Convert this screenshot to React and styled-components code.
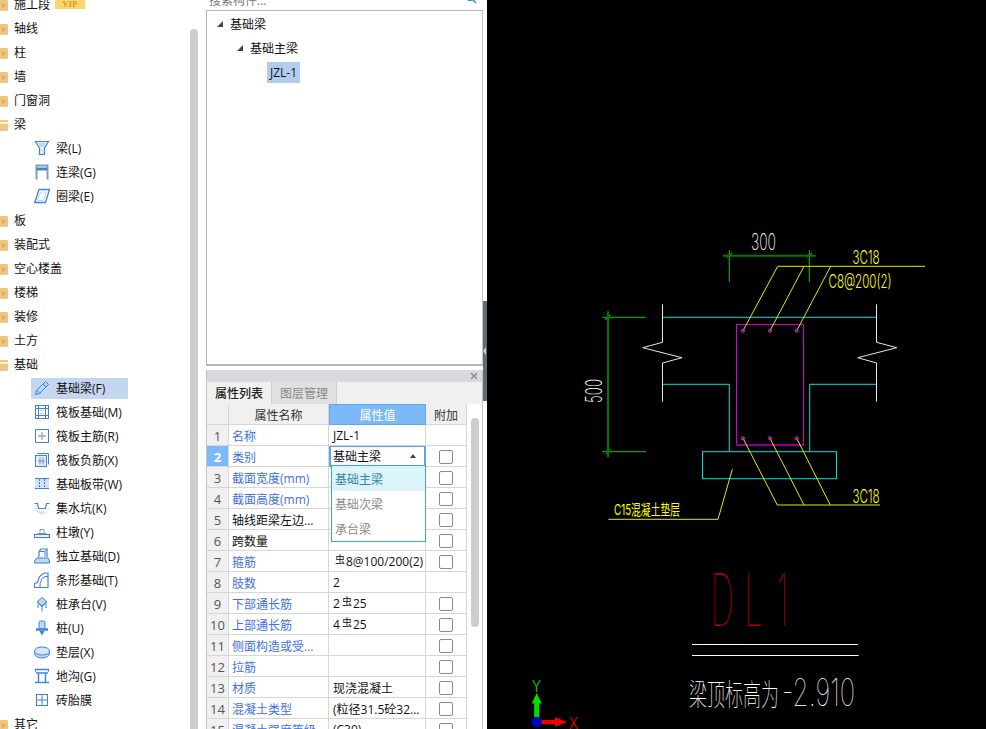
import React from "react";
import styled, { createGlobalStyle } from "styled-components";

const Blue = "#3f82d8";
const Pale = "#bcd6f3";

const icons = {
  beam: (
    <>
      <path d="M1.500 1.500h13l-4 6.500v6.500h-5V8z" fill="none" stroke={Blue} strokeWidth="1.200" />
      <path d="M3.500 2.500h9l-3 4.500h-3z" fill={Pale} />
      <path d="M6 8l4 6M10 8l-4 6" stroke={Pale} />
    </>
  ),
  link: (
    <>
      <path d="M2.500 15.500V1.500h11v14" fill="none" stroke="#8b9aa8" strokeWidth="2" />
      <rect x="3" y="3.500" width="10" height="3" fill={Blue} />
    </>
  ),
  ring: (
    <>
      <path d="M5 1.500h10.500l-4 13H.8z" fill="none" stroke={Blue} strokeWidth="1.300" />
      <path d="M6.500 4h6l-3 8.500H3.500z" fill="none" stroke={Pale} />
    </>
  ),
  pencil: (
    <>
      <path d="M1.500 14.500l1-4L11.500 1.500l3 3-9 9z" fill={Pale} stroke={Blue} />
      <path d="M3 10.500l3 3M9 4l3 3" stroke={Blue} />
    </>
  ),
  raft: (
    <>
      <rect x="1.500" y="1.500" width="13" height="13" fill="none" stroke={Blue} />
      <path d="M1 4.500h14M1 11.500h14M4.500 1v14M11.500 1v14" stroke={Blue} />
      <path d="M6 6.500h4M6 9.500h4" stroke={Pale} />
    </>
  ),
  rebar: (
    <>
      <rect x="1.500" y="1.500" width="13" height="13" fill="none" stroke={Blue} />
      <path d="M8 4v8M4 8h8" stroke="#9ab0c8" strokeWidth="1.500" />
    </>
  ),
  negative: (
    <>
      <rect x="1.500" y="3.500" width="11" height="11" fill="#e4eefa" stroke={Blue} />
      <path d="M3.500 1.500h11v11" fill="none" stroke={Blue} />
      <path d="M6 5.500v7M9 5.500v7M4 9h7" stroke="#6f8fb8" />
    </>
  ),
  strip: (
    <>
      <rect x="1" y="2" width="14" height="11" fill="#d3e4f7" />
      <path d="M1 2.500h14M1 12.500h14" stroke={Blue} />
      <path d="M5.500 3v9M10.500 3v9" stroke={Blue} strokeDasharray="2 1" />
    </>
  ),
  pit: (
    <>
      <path d="M.5 3.500h3l1 5h7l1-5h3" fill="none" stroke={Blue} strokeWidth="1.200" />
      <path d="M1 8c2 7 12 7 14 0" fill="none" stroke="#9fb4c8" strokeDasharray="1 1" />
      <path d="M5 11h6M6 13h4" stroke="#b5c2ce" strokeDasharray="1 1" />
    </>
  ),
  pier: (
    <>
      <path d="M6 9.500V5.500h4v4" fill="none" stroke="#8b9aa8" />
      <path d="M3.500 9.500h9" stroke="#8b9aa8" />
      <rect x=".5" y="10.500" width="15" height="3" fill="none" stroke={Blue} strokeWidth="1.200" />
    </>
  ),
  isolated: (
    <>
      <path d="M5 9V3.500L7 1h6v8" fill="#fff" stroke={Blue} strokeWidth="1.200" />
      <path d="M5 3.500h6V9M11 3.500L13 1" fill="none" stroke={Blue} />
      <path d="M3 10h11l1.500 3v2H.5v-2z" fill={Pale} stroke={Blue} />
    </>
  ),
  stripBase: (
    <>
      <path d="M.5 15.500v-4l3-1 2-6L10 1h4v14.500z" fill="none" stroke={Blue} strokeWidth="1.200" />
      <path d="M6 15.500v-4l2-5 3-2h3" fill="none" stroke={Blue} />
    </>
  ),
  cap: (
    <>
      <path d="M8 1.500L13 6l-5 4.500L3 6z" fill={Pale} stroke={Blue} />
      <path d="M4 8v4M8 10v5.500M12 8v4M3 6l5 4 5-4" fill="none" stroke={Blue} />
    </>
  ),
  pile: (
    <>
      <rect x="5" y="1" width="6" height="8" rx="1.500" fill={Pale} stroke={Blue} />
      <path d="M2 9.500h12" stroke={Blue} strokeWidth="2.500" />
      <path d="M5.500 11h5L8 15.500z" fill={Blue} />
    </>
  ),
  cushion: (
    <>
      <ellipse cx="8" cy="9.500" rx="7.500" ry="4.500" fill={Pale} stroke={Blue} />
      <ellipse cx="8" cy="7" rx="7.500" ry="4" fill="#d8e7f8" stroke={Blue} />
    </>
  ),
  trench: (
    <>
      <path d="M1 1.500h14M2.500 5h11" stroke={Blue} strokeWidth="1.400" />
      <path d="M4.500 5v9M11.500 5v9" stroke={Blue} strokeWidth="1.400" />
      <path d="M1 14.500h14" stroke={Blue} strokeWidth="1.400" />
      <path d="M1 1.500L2.500 5M15 1.500L13.500 5" stroke={Blue} />
    </>
  ),
  brick: (
    <>
      <rect x="2.500" y="2.500" width="11" height="11" fill="none" stroke={Blue} />
      <path d="M8 2.500v11M2.500 8h11" stroke={Blue} />
    </>
  ),
};

const tree = [
  { name: "施工段", vip: true },
  { name: "轴线" },
  { name: "柱" },
  { name: "墙" },
  { name: "门窗洞" },
  { name: "梁", open: true },
  { name: "梁(L)", icon: "beam" },
  { name: "连梁(G)", icon: "link" },
  { name: "圈梁(E)", icon: "ring" },
  { name: "板" },
  { name: "装配式" },
  { name: "空心楼盖" },
  { name: "楼梯" },
  { name: "装修" },
  { name: "土方" },
  { name: "基础", open: true },
  { name: "基础梁(F)", icon: "pencil", active: true },
  { name: "筏板基础(M)", icon: "raft" },
  { name: "筏板主筋(R)", icon: "rebar" },
  { name: "筏板负筋(X)", icon: "negative" },
  { name: "基础板带(W)", icon: "strip" },
  { name: "集水坑(K)", icon: "pit" },
  { name: "柱墩(Y)", icon: "pier" },
  { name: "独立基础(D)", icon: "isolated" },
  { name: "条形基础(T)", icon: "stripBase" },
  { name: "桩承台(V)", icon: "cap" },
  { name: "桩(U)", icon: "pile" },
  { name: "垫层(X)", icon: "cushion" },
  { name: "地沟(G)", icon: "trench" },
  { name: "砖胎膜", icon: "brick" },
  { name: "其它" },
];

const Bar = () => <Steel>虫</Steel>;

const props = [
  { name: "名称", value: "JZL-1", link: true, noCheck: true },
  { name: "类别", value: "基础主梁", link: true, editing: true },
  { name: "截面宽度(mm)", link: true },
  { name: "截面高度(mm)", link: true },
  { name: "轴线距梁左边..." },
  { name: "跨数量" },
  { name: "箍筋", value: <><Bar />8@100/200(2)</>, link: true },
  { name: "肢数", value: "2", link: true, noCheck: true },
  { name: "下部通长筋", value: <>2<Bar />25</>, link: true },
  { name: "上部通长筋", value: <>4<Bar />25</>, link: true },
  { name: "侧面构造或受...", link: true },
  { name: "拉筋", link: true },
  { name: "材质", value: "现浇混凝土", link: true },
  { name: "混凝土类型", value: "(粒径31.5砼32...", link: true },
  { name: "混凝土强度等级", value: "(C30)", link: true },
];

function Folder({ open }) {
  return (
    <FolderIcon viewBox="0 0 16 14">
      <path d="M0 2.500Q0 1 1.500 1h4L7.500 3H15q1 0 1 1v9q0 1-1 1H1q-1 0-1-1z" fill="#f0c780" />
      {open ? (
        <path d="M4 5h12v2H5z" fill="#fcefd2" />
      ) : (
        <path d="M10 5l4 3.500-4 3.500z" fill="#dfb066" />
      )}
    </FolderIcon>
  );
}

function TreeRow({ item }) {
  if (item.icon) {
    return (
      <ChildRow $active={item.active}>
        <Icon viewBox="0 0 16 16">{icons[item.icon]}</Icon>
        {item.name}
      </ChildRow>
    );
  }
  return (
    <ParentRow>
      <Folder open={item.open} />
      {item.name}
      {item.vip && <Vip>VIP</Vip>}
    </ParentRow>
  );
}

function Drawing() {
  return (
    <svg viewBox="487 0 499 729" width="499" height="729" fill="none">
      {/* dimensions */}
      <g stroke="#00c800">
        <path d="M729.300 250v32M809.300 250v32M602.300 317.300H646M602.300 451.700H646" />
        <path d="M726.500 258l5.500-5M806.500 258l5.500-5M605 320l5.500-5.500M605 454.500l5.500-5.500" />
      </g>
      <path d="M723 255.700h92.700M608 311v146.300" stroke="#007a00" strokeWidth="2" />
      {/* concrete outline */}
      <g stroke="#00e0e0">
        <path d="M662.700 317.300H876M662.700 384.300h66.600v67.400M876 384.300h-66.300v67.400" />
        <rect x="702.500" y="451.700" width="134" height="27" />
      </g>
      {/* break lines */}
      <g stroke="#e8e8e8">
        <path d="M662.500 304.300v38l-19.800 5.400 39.300 10-19.500 5.300v38.700" />
        <path d="M876.500 304.300v38l20.200 5.400-39 10 18.800 5.300v38.700" />
      </g>
      {/* stirrup and bars */}
      <path d="M736.500 445V324.500h67V445" stroke="#d000d0" />
      <path d="M736 445h68" stroke="#8a008a" strokeWidth="2" />
      {/* leaders */}
      <g stroke="#e8e800">
        <path d="M925 266.300H777.700L743 330.700M804 266.300l-34 64.400M830.700 266.300l-34 64.400" />
        <path d="M880 505H777.300L743 438.300M804 505l-34-66.700M830.300 505l-33.600-66.700" />
        <path d="M732.300 469.300L718 519.300H608.300" />
      </g>
      <g stroke="#ff20ff">
        {[743, 770, 796.7].map((x) => (
          <React.Fragment key={x}>
            <circle cx={x} cy="330.700" r="1.500" />
            <circle cx={x} cy="438.300" r="1.500" />
          </React.Fragment>
        ))}
      </g>
      <CadText $weight={200} x="751" y="250" fontSize="23" textLength="25" lengthAdjust="spacingAndGlyphs" fill="#fff">300</CadText>
      <CadText $weight={200} x="0" y="0" fontSize="23" textLength="24" lengthAdjust="spacingAndGlyphs" fill="#fff" transform="translate(602 403) rotate(-90)">500</CadText>
      <CadText $weight={300} x="852.500" y="264" fontSize="18" textLength="27" lengthAdjust="spacingAndGlyphs" fill="#ffff00">3C18</CadText>
      <CadText $weight={300} x="852.500" y="503" fontSize="18" textLength="27" lengthAdjust="spacingAndGlyphs" fill="#ffff00">3C18</CadText>
      <CadText $weight={300} x="828.500" y="288" fontSize="18" textLength="63" lengthAdjust="spacingAndGlyphs" fill="#ffff00">C8@200(2)</CadText>
      <CadText $weight={400} x="614" y="515" fontSize="15" textLength="66" lengthAdjust="spacingAndGlyphs" fill="#ffff00">C15混凝土垫层</CadText>
      <CadText $weight={100} x="0 75 146" y="0" fontSize="72" fill="#f00000" stroke="#000" strokeWidth="0.400" transform="translate(711 626) scale(.45 1)">DL1</CadText>
      <path d="M692 644.500h165.700M692 655.500h166.700" stroke="#fff" />
      <CadText $weight={100} x="0" y="0" fontSize="30" fill="#fff" transform="translate(689 705) scale(.6 1)">梁顶标高为</CadText>
      <CadText $weight={100} x="782" y="706" fontSize="38" textLength="73" lengthAdjust="spacingAndGlyphs" fill="#fff">-2.910</CadText>
      {/* axis */}
      <path d="M536.700 722v-22" stroke="#00e000" strokeWidth="5" />
      <path d="M531.700 703.500l5-10.500 5 10.500z" fill="#00e000" />
      <path d="M536.700 722H556" stroke="#f00000" strokeWidth="4" />
      <path d="M555 717l12 5-12 5z" fill="#f00000" />
      <circle cx="536.700" cy="722" r="5.200" fill="#0000c0" />
      <CadText $weight={300} x="532" y="692" fontSize="16" textLength="9" lengthAdjust="spacingAndGlyphs" fill="#00e000">Y</CadText>
      <CadText $weight={300} x="569" y="728.500" fontSize="16" textLength="9" lengthAdjust="spacingAndGlyphs" fill="#f00000">X</CadText>
    </svg>
  );
}

export default function App() {
  return (
    <>
      <GlobalStyle />
      <Page>
        <LeftPanel>
          <TreeList>
            {tree.map((item) => (
              <TreeRow key={item.name} item={item} />
            ))}
          </TreeList>
          <TreeScroll />
        </LeftPanel>
        <MiddlePanel>
          <TopPanel>
            <SearchBar>
              <SearchText>搜索构件...</SearchText>
              <SearchIcon viewBox="0 0 12 12">
                <circle cx="5" cy="5" r="3.500" fill="none" stroke="#3c8fd8" strokeWidth="1.400" />
                <path d="M7.500 7.500L11 11" stroke="#3c8fd8" strokeWidth="1.600" />
              </SearchIcon>
            </SearchBar>
            <ComponentTree>
              <Node $level={0}><Caret />基础梁</Node>
              <Node $level={1}><Caret />基础主梁</Node>
              <LeafRow><Leaf>JZL-1</Leaf></LeafRow>
            </ComponentTree>
          </TopPanel>
          <BottomPanel>
            <CloseBar>
              <CloseMark viewBox="0 0 8 8">
                <path d="M1 1l6 6M7 1L1 7" stroke="#8a8f94" strokeWidth="1.500" />
              </CloseMark>
            </CloseBar>
            <Tabs>
              <Tab $active>属性列表</Tab>
              <Tab>图层管理</Tab>
            </Tabs>
            <TableArea>
              <Table>
                <Row>
                  <HeadCell />
                  <HeadCell>属性名称</HeadCell>
                  <HeadCell $selected>属性值</HeadCell>
                  <HeadCell>附加</HeadCell>
                </Row>
                {props.map((prop, index) => (
                  <Row key={prop.name}>
                    <NumCell $selected={prop.editing}>{index + 1}</NumCell>
                    <NameCell $link={prop.link}>{prop.name}</NameCell>
                    {prop.editing ? (
                      <EditCell>
                        {prop.value}
                        <UpArrow />
                        <Menu>
                          <MenuItem $active>基础主梁</MenuItem>
                          <MenuItem>基础次梁</MenuItem>
                          <MenuItem>承台梁</MenuItem>
                        </Menu>
                      </EditCell>
                    ) : (
                      <ValueCell>{prop.value}</ValueCell>
                    )}
                    <CheckCell>{!prop.noCheck && <Check />}</CheckCell>
                  </Row>
                ))}
              </Table>
              <TableScroll>
                <TableThumb />
              </TableScroll>
            </TableArea>
          </BottomPanel>
        </MiddlePanel>
        <Splitter>
          <Handle />
        </Splitter>
        <Canvas>
          <Drawing />
        </Canvas>
      </Page>
    </>
  );
}

const GlobalStyle = createGlobalStyle`
  html, body {
    margin: 0;
    height: 100%;
    overflow: hidden;
    background: #fff;
  }
  body {
    font-family: "Open Sans", "Noto Sans CJK SC", "Liberation Sans", sans-serif;
    font-size: 12px;
    color: #111;
  }
`;

const Page = styled.div`
  display: flex;
  width: 986px;
  height: 729px;
  overflow: hidden;
`;

const LeftPanel = styled.div`
  display: flex;
  width: 206px;
  flex: none;
  overflow: hidden;
`;

const TreeList = styled.div`
  display: flex;
  flex-direction: column;
  width: 190px;
  flex: none;
  margin-top: -8px;
`;

const ParentRow = styled.div`
  display: flex;
  align-items: center;
  height: 24px;
  flex: none;
  margin-left: -8px;
`;

const FolderIcon = styled.svg`
  width: 16px;
  height: 14px;
  margin-right: 6px;
  flex: none;
`;

const Vip = styled.span`
  align-self: flex-start;
  width: 30px;
  height: 17px;
  padding-top: 8px;
  box-sizing: border-box;
  margin-left: 5px;
  background: #ffd468;
  color: #c9992c;
  font: bold 8px/9px "Liberation Serif", serif;
  letter-spacing: 0.5px;
  text-align: center;
`;

const ChildRow = styled.div`
  display: flex;
  align-items: center;
  width: 97px;
  height: 21px;
  flex: none;
  margin: 2px 0 1px 31px;
  padding: 0 0 1px 3px;
  box-sizing: border-box;
  white-space: nowrap;
  background: ${(p) => (p.$active ? "#c5d7f0" : "transparent")};
`;

const Icon = styled.svg`
  width: 16px;
  height: 16px;
  margin-right: 6px;
  flex: none;
`;

const TreeScroll = styled.div`
  width: 8px;
  margin-top: 29px;
  border-radius: 4px 4px 0 0;
  background: #cdcdcd;
`;

const MiddlePanel = styled.div`
  display: flex;
  flex-direction: column;
  width: 277px;
  flex: none;
`;

const TopPanel = styled.div`
  display: flex;
  flex-direction: column;
  height: 366px;
  flex: none;
  border-bottom: 1px solid #b4b4b4;
  box-sizing: border-box;
`;

const SearchBar = styled.div`
  display: flex;
  align-items: center;
  justify-content: space-between;
  height: 20px;
  margin-top: -10px;
  padding: 0 6px 0 3px;
  flex: none;
`;

const SearchText = styled.span`
  color: #777;
`;

const SearchIcon = styled.svg`
  width: 12px;
  height: 12px;
  margin-top: -4px;
`;

const ComponentTree = styled.div`
  flex: 1;
  padding-top: 1px;
  border: 1px solid #b8b8b8;
  border-right-color: #c4c4c4;
`;

const Node = styled.div`
  display: flex;
  align-items: center;
  height: 24px;
  padding-left: ${(p) => 10 + p.$level * 20}px;
`;

const Caret = styled.span`
  width: 0;
  height: 0;
  margin-right: 7px;
  border-style: solid;
  border-width: 0 0 6px 6px;
  border-color: transparent transparent #444 transparent;
`;

const LeafRow = styled.div`
  display: flex;
  align-items: center;
  height: 24px;
  padding-left: 60px;
`;

const Leaf = styled.span`
  padding: 2px 3px;
  line-height: 17px;
  background: #b0cdf0;
`;

const BottomPanel = styled.div`
  display: flex;
  flex-direction: column;
  flex: 1;
  min-height: 0;
  margin-top: 4px;
  border-right: 1px solid #c4c4c4;
  border-left: 1px solid #c4c4c4;
`;

const CloseBar = styled.div`
  display: flex;
  align-items: center;
  justify-content: flex-end;
  height: 12px;
  padding-right: 4px;
  flex: none;
  background: #d8dade;
`;

const CloseMark = styled.svg`
  width: 8px;
  height: 8px;
`;

const Tabs = styled.div`
  display: flex;
  height: 22px;
  flex: none;
  background: #f0f0f0;
`;

const Tab = styled.div`
  display: flex;
  align-items: center;
  justify-content: center;
  width: 65px;
  font-weight: ${(p) => (p.$active ? 500 : 400)};
  color: ${(p) => (p.$active ? "#222" : "#888")};
  background: ${(p) => (p.$active ? "#f0f0f0" : "#e0e0e0")};
  border-right: 1px solid #d0d0d0;
  box-sizing: border-box;
`;

const TableArea = styled.div`
  display: flex;
  flex: 1;
  min-height: 0;
  overflow: hidden;
`;

const Table = styled.div`
  width: 260px;
  flex: none;
`;

const Row = styled.div`
  display: grid;
  grid-template-columns: 22px 100px 97px 41px;
  height: 21px;
`;

const Cell = styled.div`
  display: flex;
  align-items: center;
  min-width: 0;
  padding-top: 1px;
  white-space: nowrap;
  border-right: 1px solid #d6d6d6;
  border-bottom: 1px solid #d6d6d6;
  box-sizing: border-box;
`;

const HeadCell = styled(Cell)`
  justify-content: center;
  background: ${(p) => (p.$selected ? "#7db9f6" : "#f0f0f0")};
  color: ${(p) => (p.$selected ? "#fff" : "#333")};
  ${(p) => p.$selected && "border: 1px solid #5ea6ee;"}
`;

const NumCell = styled(Cell)`
  justify-content: center;
  font-size: 13px;
  font-weight: ${(p) => (p.$selected ? 700 : 400)};
  color: ${(p) => (p.$selected ? "#fff" : "#555")};
  background: ${(p) => (p.$selected ? "#7db9f6" : "#f0f0f0")};
`;

const NameCell = styled(Cell)`
  padding-left: 3px;
  color: ${(p) => (p.$link ? "#3f6fe6" : "#111")};
`;

const ValueCell = styled(Cell)`
  padding-left: 4px;
`;

const EditCell = styled(Cell)`
  position: relative;
  padding-left: 2px;
  padding-top: 0;
  border: 2px solid #5aa6ea;
  border-top-width: 1px;
`;

const UpArrow = styled.span`
  position: absolute;
  right: 8px;
  top: 7px;
  border-style: solid;
  border-width: 0 3px 4px 3px;
  border-color: transparent transparent #444 transparent;
`;

const Menu = styled.div`
  position: absolute;
  left: 0;
  top: 18px;
  z-index: 2;
  width: 95px;
  box-sizing: border-box;
  background: #fff;
  border: 1px solid #3ba5d3;
`;

const MenuItem = styled.div`
  display: flex;
  align-items: center;
  height: 25px;
  padding-left: 3px;
  color: ${(p) => (p.$active ? "#2b87ad" : "#8a8a8a")};
  background: ${(p) => (p.$active ? "#dcf3fb" : "#fff")};
`;

const CheckCell = styled(Cell)`
  justify-content: center;
`;

const Check = styled.span`
  width: 12px;
  height: 12px;
  border: 1px solid #8a8a8a;
  border-radius: 2px;
`;

const Steel = styled.span`
  font-size: 10px;
  position: relative;
  top: -3px;
  margin: 0 1px 0 2px;
`;

const TableScroll = styled.div`
  flex: 1;
  padding: 14px 3px 0 4px;
`;

const TableThumb = styled.div`
  height: 209px;
  border-radius: 4px;
  background: #cdcdcd;
`;

const Splitter = styled.div`
  width: 4px;
  flex: none;
`;

const Handle = styled.div`
  position: relative;
  height: 100px;
  margin-top: 301px;
  background: #5f6b76;

  &:after {
    content: "";
    position: absolute;
    left: 0;
    top: 46px;
    border-style: solid;
    border-width: 4px 3px 4px 0;
    border-color: transparent #c8ccd0 transparent transparent;
  }
`;

const Canvas = styled.div`
  width: 499px;
  height: 729px;
  flex: none;
  background: #000;
`;

const CadText = styled.text`
  font-family: Inter, "Noto Sans CJK SC", sans-serif;
  font-weight: ${(p) => p.$weight};
`;
